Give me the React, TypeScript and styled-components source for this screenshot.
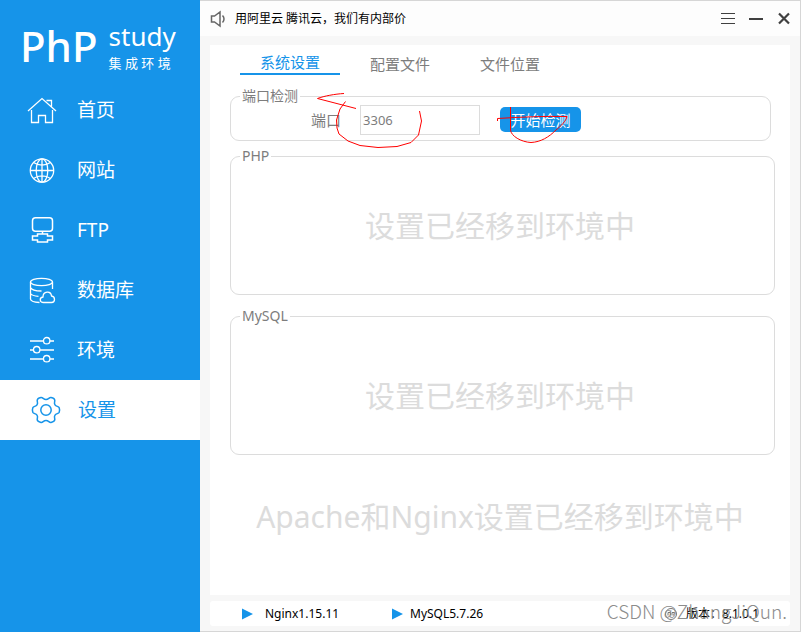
import React from "react";
import styled, { createGlobalStyle } from "styled-components";

const BLUE = "#1694e9";
const LINE = "#dcdcdc";
const MUTED = "#7d7d7d";

const GlobalStyle = createGlobalStyle`
  *, *::before, *::after { box-sizing: border-box; }
  body {
    margin: 0;
    background: #f7f7f7;
    font-family: "Noto Sans", "Noto Sans CJK SC", sans-serif;
    color: #000;
  }
  button, input { font-family: inherit; }
`;

const Window = styled.div`
  position: relative;
  display: flex;
  min-height: 100vh;
  border: solid #d6d6d6;
  border-width: 0 1px 0 0;
`;

const Sidebar = styled.aside`
  flex: 0 0 200px;
  background: ${BLUE};
  color: #fff;
`;

const Logo = styled.div`
  display: flex;
  gap: 11px;
  height: 80px;
  padding: 19px 0 0 20px;
`;

const LogoMark = styled.span`
  font-size: 42px;
  font-weight: 500;
  line-height: 54px;
`;

const LogoSide = styled.span`
  display: flex;
  flex-direction: column;
`;

const LogoWord = styled.span`
  font-size: 26px;
  line-height: 34px;
`;

const LogoSub = styled.span`
  font-size: 13px;
  line-height: 20px;
`;

const Nav = styled.nav`
  display: flex;
  flex-direction: column;
`;

const NavItem = styled.a<{ $active?: boolean }>`
  display: flex;
  align-items: center;
  height: 60px;
  padding-left: ${(p) => (p.$active ? 31 : 27)}px;
  gap: ${(p) => (p.$active ? 17 : 20)}px;
  background: ${(p) => (p.$active ? "#fff" : "transparent")};
  color: ${(p) => (p.$active ? BLUE : "#fff")};
  font-size: 19px;
  line-height: 28px;
  text-decoration: none;
`;

const Glyph = styled.svg`
  display: block;
  flex: none;
  fill: none;
  stroke: currentColor;
  stroke-width: 1.3;
`;

const Main = styled.main`
  display: flex;
  flex: 1;
  flex-direction: column;
  min-width: 0;
  border: solid #d6d6d6;
  border-width: 1px 0;
  background: #f7f7f7;
`;

const TitleBar = styled.header`
  display: flex;
  align-items: center;
  height: 35px;
  padding: 0 8px 0 10px;
  background: #fdfdfd;
  color: #404040;
`;

const Notice = styled.span`
  flex: 1;
  padding-left: 9px;
  color: #000;
  font-size: 12px;
  line-height: 18px;
`;

const WindowButtons = styled.div`
  display: flex;
  gap: 12px;
`;

const WindowButton = styled.button`
  display: block;
  padding: 0;
  border: 0;
  background: none;
  color: #404040;
`;

const Panel = styled.section`
  flex: 1;
  margin: 9px 10px 0;
  padding: 0 15px 20px 20px;
  background: #fff;
`;

const Tabs = styled.div`
  display: flex;
  gap: 10px;
  padding-left: 10px;
  margin-bottom: 13px;
`;

const Tab = styled.button<{ $active?: boolean }>`
  width: 100px;
  height: 30px;
  padding: ${(p) => (p.$active ? 6 : 8)}px 0 0;
  border: 0;
  border-bottom: ${(p) => (p.$active ? `2px solid ${BLUE}` : "0")};
  background: none;
  color: ${(p) => (p.$active ? BLUE : MUTED)};
  font-size: 15px;
  line-height: 20px;
`;

const Group = styled.fieldset`
  min-width: 0;
  margin: 0;
  padding: 0;
  border: 1px solid ${LINE};
  border-radius: 9px;
`;

const GroupTitle = styled.legend`
  margin-left: 9px;
  padding: 0 2px;
  color: ${MUTED};
  font-size: 14px;
  line-height: 16px;
`;

const PortSection = styled.div`
  position: relative;
  margin: 0 4px 7px 0;
`;

const PortRow = styled.div`
  display: flex;
  align-items: center;
  padding: 1px 0 5px 80px;
`;

const PortLabel = styled.label`
  margin-right: 19px;
  color: ${MUTED};
  font-size: 15px;
  line-height: 22px;
`;

const PortInput = styled.input`
  width: 120px;
  height: 30px;
  margin-right: 20px;
  padding: 0 2px;
  border: 1px solid ${LINE};
  background: #fff;
  color: ${MUTED};
  font-size: 13px;
`;

const CheckButton = styled.button`
  min-width: 81px;
  height: 25px;
  margin-bottom: 1px;
  padding: 0 10px;
  border: 0;
  border-radius: 5px;
  background: ${BLUE};
  color: #fff;
  font-size: 15px;
  line-height: 22px;
`;

const Markup = styled.svg`
  position: absolute;
  top: 0;
  left: 0;
  fill: none;
  stroke: #f00;
  stroke-width: 1;
  pointer-events: none;
`;

const GroupStack = styled.div`
  display: flex;
  flex-direction: column;
  gap: 13px;
`;

const Moved = styled.p<{ $top: number; $bottom: number }>`
  margin: 0;
  padding: ${(p) => p.$top}px 5px ${(p) => p.$bottom}px 0;
  color: #dcdcdc;
  font-size: 30px;
  line-height: 40px;
  text-align: center;
`;

const StatusBar = styled.footer`
  display: flex;
  align-items: center;
  height: 25px;
  margin: 6px 10px 5px;
  padding: 0 31px 0 32px;
  border-radius: 3px;
  background: #fff;
  font-size: 12px;
  line-height: 18px;
`;

const Service = styled.span<{ $gap: number }>`
  display: flex;
  align-items: center;
  gap: ${(p) => p.$gap}px;
  width: 150px;
`;

const Version = styled.span`
  display: flex;
  align-items: center;
  gap: 8px;
  margin-left: auto;
`;

const Watermark = styled.span`
  position: absolute;
  right: 13px;
  bottom: 7px;
  color: #8c8c8c;
  font-family: "Noto Sans CJK SC", "Noto Sans", sans-serif;
  font-size: 19px;
  font-weight: 300;
  line-height: 28px;
  pointer-events: none;
`;

const HomeIcon = () => (
  <Glyph width="30" height="30" viewBox="0 0 30 30">
    <path d="M1 16 15 3.5 29 16M19.500 5.500h5v6M4.500 15v12.500h7V20.500h7v7h7V15" />
  </Glyph>
);

const GlobeIcon = () => (
  <Glyph width="30" height="30" viewBox="0 0 30 30">
    <circle cx="15" cy="15.500" r="11.700" />
    <ellipse cx="15" cy="15.500" rx="5.800" ry="11.700" />
    <path d="M15 4v23M3.500 15.500h23M6.500 7.500c5 3.400 12 3.400 17 0M6.500 23.500c5-3.400 12-3.400 17 0" />
  </Glyph>
);

const FtpIcon = () => (
  <Glyph width="30" height="30" viewBox="0 0 30 30">
    <rect x="5.500" y="2.800" width="20" height="13.500" rx="3" strokeWidth="1.500" />
    <path d="M15.500 16.500v2.500M10.500 19h10v2h5v4h-5v2h-10v-2h-5v-4h5z" strokeWidth="1.500" />
  </Glyph>
);

const DatabaseIcon = () => (
  <Glyph width="30" height="30" viewBox="0 0 30 30">
    <ellipse cx="14.500" cy="7" rx="11" ry="3.700" />
    <path d="M3.500 7v17c0 1.800 4 3.200 9 3.500M25.500 7v7M3.500 12.500c1 2.500 5 3.500 11 3.500M3.500 18.500c1 1.500 4 2.500 8 2.800" />
    <path d="M16.500 27.500c-4 0-4.500-5-.500-5.500 0-6 8-6.500 8.500-1 4 .500 4 6.500 0 6.500z" />
  </Glyph>
);

const SlidersIcon = () => (
  <Glyph width="30" height="30" viewBox="0 0 30 30">
    <path d="M3 6h13.500M23 6h4M3 15h3.500M13 15h14M3 24h13.500M23 24h4" />
    <circle cx="19.700" cy="5.700" r="3.200" />
    <circle cx="9.700" cy="14.700" r="3.200" />
    <circle cx="19.700" cy="23.700" r="3.200" />
  </Glyph>
);

const GearIcon = () => (
  <Glyph width="30" height="30" viewBox="0 0 30 30">
    <circle cx="15" cy="15" r="5.200" strokeWidth="1.500" />
    <path
      d="M10 2.600C12 2.300 12.300 4.500 15 4.500S18 2.300 20 2.600C22 3 23.800 4.200 23.800 5.500C23.800 7 22.800 8 24 9.800C25.200 11.800 27.500 11 28.200 12.800C28.700 14.200 28.700 15.800 28.200 17.200C27.500 19 25.200 18.200 24 20.200C22.800 22 23.800 23 23.800 24.500C23.800 25.800 22 27 20 27.400C18 27.700 17.700 25.500 15 25.500S12 27.700 10 27.400C8 27 6.200 25.800 6.200 24.500C6.200 23 7.200 22 6 20.200C4.800 18.200 2.500 19 1.800 17.200C1.300 15.800 1.300 14.200 1.800 12.800C2.500 11 4.800 11.800 6 9.800C7.200 8 6.200 7 6.200 5.500C6.200 4.200 8 3 10 2.600Z"
      strokeWidth="1.500"
    />
  </Glyph>
);

const Play = () => (
  <svg width="11" height="12" viewBox="0 0 11 12" fill={BLUE}>
    <path d="M0 .500 11 6 0 11.500z" />
  </svg>
);

const navItems = [
  { label: "首页", Icon: HomeIcon },
  { label: "网站", Icon: GlobeIcon },
  { label: "FTP", Icon: FtpIcon },
  { label: "数据库", Icon: DatabaseIcon },
  { label: "环境", Icon: SlidersIcon },
  { label: "设置", Icon: GearIcon, active: true },
];

export default function App() {
  return (
    <Window>
      <GlobalStyle />
      <Sidebar>
        <Logo>
          <LogoMark>PhP</LogoMark>
          <LogoSide>
            <LogoWord>study</LogoWord>
            <LogoSub>集 成 环 境</LogoSub>
          </LogoSide>
        </Logo>
        <Nav>
          {navItems.map(({ label, Icon, active }) => (
            <NavItem key={label} href="#" $active={active}>
              <Icon />
              {label}
            </NavItem>
          ))}
        </Nav>
      </Sidebar>
      <Main>
        <TitleBar>
          <Glyph width="16" height="18" viewBox="0 0 16 18">
            <path d="M1.500 6h3L10 2v14L4.500 12h-3zM12.500 5.500c2 2 2 5 0 7" stroke="#666" strokeWidth="1.500" />
          </Glyph>
          <Notice>用阿里云 腾讯云，我们有内部价</Notice>
          <WindowButtons>
            <WindowButton aria-label="菜单">
              <Glyph width="16" height="16" viewBox="0 0 16 16">
                <path d="M1 2.500h14M1 7.500h14M1 12.500h14" strokeWidth="1" />
              </Glyph>
            </WindowButton>
            <WindowButton aria-label="最小化">
              <Glyph width="16" height="16" viewBox="0 0 16 16">
                <path d="M1 8h14" strokeWidth="2" />
              </Glyph>
            </WindowButton>
            <WindowButton aria-label="关闭">
              <Glyph width="16" height="16" viewBox="0 0 16 16">
                <path d="m3 2.500 10 10m0-10-10 10" strokeWidth="2.200" />
              </Glyph>
            </WindowButton>
          </WindowButtons>
        </TitleBar>
        <Panel>
          <Tabs role="tablist">
            <Tab role="tab" aria-selected="true" $active>系统设置</Tab>
            <Tab role="tab" aria-selected="false">配置文件</Tab>
            <Tab role="tab" aria-selected="false">文件位置</Tab>
          </Tabs>
          <PortSection>
            <Group>
              <GroupTitle>端口检测</GroupTitle>
              <PortRow>
                <PortLabel htmlFor="port">端口</PortLabel>
                <PortInput id="port" defaultValue="3306" />
                <CheckButton type="button">开始检测</CheckButton>
              </PortRow>
            </Group>
            <Markup width="360" height="64" viewBox="230 88 360 64" aria-hidden="true">
              <path d="M344 93.500C335 94 324 96 317.500 98.500L356 108.500" />
              <path d="M345.500 101.500L340 109L336.500 120L337 128L339 134L348 141L360 145.500L378 147.500L397 146.500L411 142.500L418.500 135L421.500 121L419.500 111" />
              <path d="M497.500 121v-2.500C520 117 545 116 567 116.500C566 121 561 126 556 130C549 137 541 142 531 142.500C521 142 511 136 510.500 130V107" />
            </Markup>
          </PortSection>
          <GroupStack>
            <Group>
              <GroupTitle>PHP</GroupTitle>
              <Moved $top={42} $bottom={48}>设置已经移到环境中</Moved>
            </Group>
            <Group>
              <GroupTitle>MySQL</GroupTitle>
              <Moved $top={52} $bottom={38}>设置已经移到环境中</Moved>
            </Group>
          </GroupStack>
          <Moved $top={42} $bottom={0}>Apache和Nginx设置已经移到环境中</Moved>
        </Panel>
        <StatusBar>
          <Service $gap={12}><Play />Nginx1.15.11</Service>
          <Service $gap={7}><Play />MySQL5.7.26</Service>
          <Version>
            <Glyph width="14" height="14" viewBox="0 0 14 14">
              <path d="M7 1.500a5.500 5.500 0 1 0 0 11 5.500 5.500 0 0 0 0-11M4 8.500V5.500h2.500v3M8 8.500v-3h2.500l-1 3" stroke="#777" strokeWidth="1" />
            </Glyph>
            版本：8.1.0.1
          </Version>
        </StatusBar>
      </Main>
      <Watermark>CSDN @ZhangJiQun.</Watermark>
    </Window>
  );
}
